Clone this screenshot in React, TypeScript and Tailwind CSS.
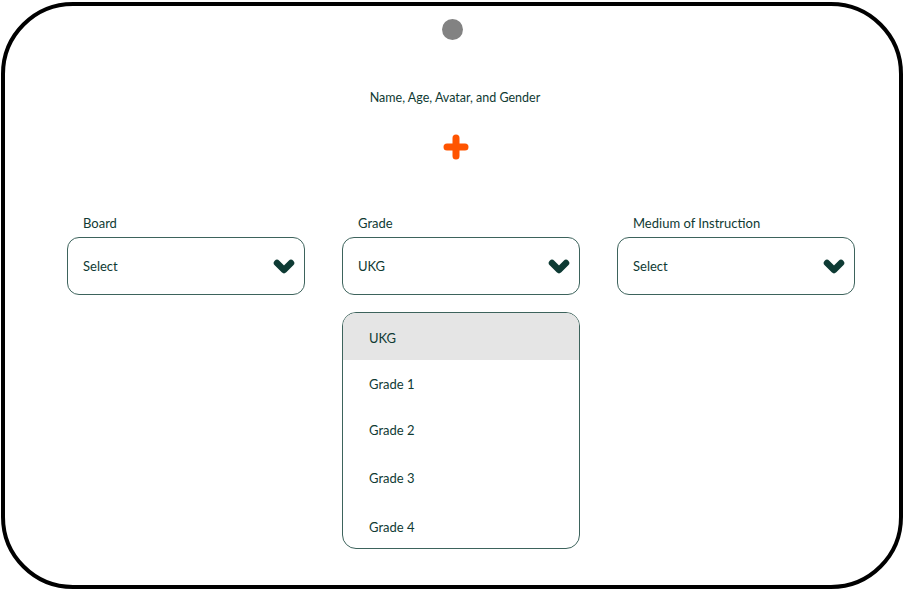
import React from "react";

const Chevron = () => (
  <svg width="22" height="18" viewBox="0 0 22 18" className="shrink-0">
    <polyline
      points="4,5 11,12 18,5"
      fill="none"
      stroke="#0e3b34"
      strokeWidth="6.5"
      strokeLinecap="round"
      strokeLinejoin="round"
    />
  </svg>
);

const Field = ({ label, value, children }: { label: string; value: string; children?: React.ReactNode }) => (
  <div className="relative w-[238px] flex flex-col">
    <div className="pl-[16px] h-[20px] text-[13px] leading-[20px] text-[#0f3a33]">{label}</div>
    <div className="mt-[4px] h-[58px] rounded-[12px] border border-[#3d635c] flex items-center justify-between pl-[15px] pr-[9px] pt-[2px]">
      <span className="text-[13px] text-[#0f3a33]">{value}</span>
      <Chevron />
    </div>
    {children}
  </div>
);

export default function App() {
  const items = [
    { t: "UKG", h: 47, active: true },
    { t: "Grade 1", h: 45 },
    { t: "Grade 2", h: 47 },
    { t: "Grade 3", h: 50 },
    { t: "Grade 4", h: 47 },
  ];
  return (
    <div className="w-[904px] h-[591px] bg-white pl-[1px] pt-[2px]" style={{ fontFamily: "Lato, 'Noto Sans', sans-serif" }}>
      <div className="w-[902px] h-[587px] border-[4px] border-black rounded-[72px] flex flex-col items-center">
        <div className="mt-[13px] w-[21px] h-[21px] rounded-full bg-[#828282]" />
        <div className="mt-[49px] ml-[6px] text-[12.5px] text-[#0f3a33]">Name, Age, Avatar, and Gender</div>
        <svg width="26" height="26" viewBox="0 0 26 26" className="mt-[26px] ml-[8px]">
          <path d="M13 4 V22 M4 13 H22" stroke="#ff5400" strokeWidth="7" strokeLinecap="round" />
        </svg>
        <div className="mt-[53px] self-stretch pl-[62px] flex gap-[37px]">
          <Field label="Board" value="Select" />
          <Field label="Grade" value="UKG">
            <div className="absolute left-0 top-[99px] w-[238px] h-[237px] rounded-[14px] border border-[#3d635c] overflow-hidden bg-white">
              {items.map((it) => (
                <div
                  key={it.t}
                  className={`flex items-center pl-[26px] pt-[4px] text-[13px] text-[#0f3a33] ${it.active ? "bg-[#e5e5e5]" : ""}`}
                  style={{ height: it.h }}
                >
                  {it.t}
                </div>
              ))}
            </div>
          </Field>
          <Field label="Medium of Instruction" value="Select" />
        </div>
      </div>
    </div>
  );
}
